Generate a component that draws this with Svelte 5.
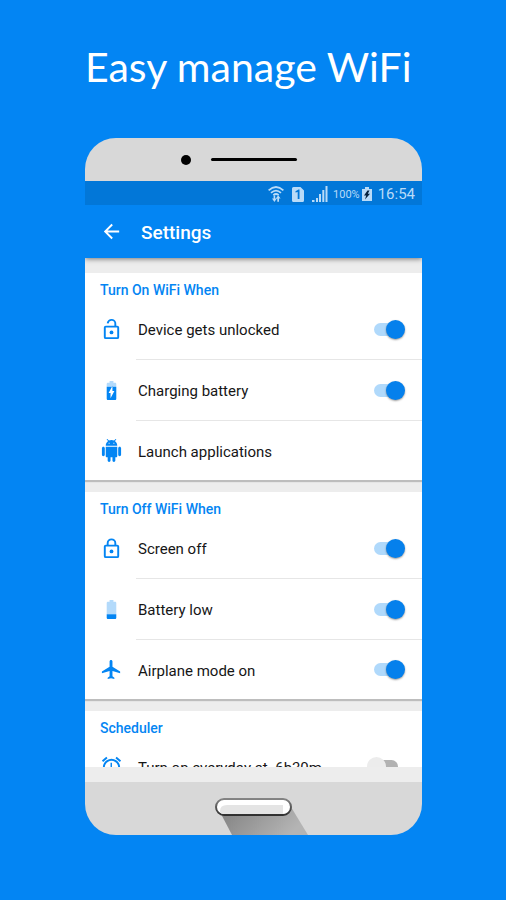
<script lang="ts">
	type IconName = 'unlock' | 'lock' | 'charging' | 'battery' | 'android' | 'plane' | 'alarm';

	interface Item {
		icon: IconName;
		label: string;
		on?: boolean;
	}

	let groups: { title: string; items: Item[] }[] = $state([
		{
			title: 'Turn On WiFi When',
			items: [
				{ icon: 'unlock', label: 'Device gets unlocked', on: true },
				{ icon: 'charging', label: 'Charging battery', on: true },
				{ icon: 'android', label: 'Launch applications' }
			]
		},
		{
			title: 'Turn Off WiFi When',
			items: [
				{ icon: 'lock', label: 'Screen off', on: true },
				{ icon: 'battery', label: 'Battery low', on: true },
				{ icon: 'plane', label: 'Airplane mode on', on: true }
			]
		},
		{
			title: 'Scheduler',
			items: [{ icon: 'alarm', label: 'Turn on everyday at  6h30m', on: false }]
		}
	]);
</script>

{#snippet icon(name: IconName)}
	<svg class="icon" viewBox="0 0 24 24" aria-hidden="true">
		{#if name === 'unlock' || name === 'lock'}
			<path
				d={name === 'lock'
					? 'M8 9V6.500a4 4 0 0 1 8 0V9'
					: 'M8 5.500A4 4 0 0 1 16 6.500V9'}
				class="icon__line"
			/>
			<rect x="5" y="9" width="14" height="12" rx="1" class="icon__line" />
			<circle cx="12" cy="15" r="2" />
		{:else if name === 'charging'}
			<path
				opacity=".3"
				d="M17 5.33C17 4.6 16.4 4 15.67 4H14V2h-4v2H8.33C7.6 4 7 4.6 7 5.33V8h10V5.33z"
			/>
			<path
				d="M7 8v12.67C7 21.4 7.6 22 8.33 22h7.33c.74 0 1.34-.6 1.34-1.33V8H7zm4 12v-5.5H9L13 7v5.5h2L11 20z"
			/>
		{:else if name === 'battery'}
			<path
				opacity=".3"
				d="M17 5.33C17 4.6 16.4 4 15.67 4H14V2h-4v2H8.33C7.6 4 7 4.6 7 5.33V17h10V5.33z"
			/>
			<path d="M7 17v3.67C7 21.4 7.6 22 8.33 22h7.33c.74 0 1.34-.6 1.34-1.33V17H7z" />
		{:else if name === 'android'}
			<path
				d="M6 18c0 .55.45 1 1 1h1v3.5c0 .83.67 1.5 1.5 1.5s1.5-.67 1.5-1.5V19h2v3.5c0 .83.67 1.5 1.5 1.5s1.5-.67 1.5-1.5V19h1c.55 0 1-.45 1-1V8H6v10zM3.5 8C2.67 8 2 8.67 2 9.5v7c0 .83.67 1.5 1.5 1.5S5 17.33 5 16.5v-7C5 8.67 4.33 8 3.5 8zm17 0c-.83 0-1.5.67-1.5 1.5v7c0 .83.67 1.5 1.5 1.5s1.5-.67 1.5-1.5v-7c0-.83-.67-1.5-1.5-1.5zm-4.97-5.84l1.3-1.3c.2-.2.2-.51 0-.71-.2-.2-.51-.2-.71 0l-1.48 1.48C13.85 1.23 12.95 1 12 1c-.96 0-1.86.23-2.66.63L7.85.15c-.2-.2-.51-.2-.71 0-.2.2-.2.51 0 .71l1.31 1.31C6.97 3.26 6 5.01 6 7h12c0-1.99-.97-3.75-2.47-4.84zM10 5H9V4h1v1zm5 0h-1V4h1v1z"
			/>
		{:else if name === 'plane'}
			<path
				d="M21 16v-2l-8-5V3.5c0-.83-.67-1.5-1.5-1.5S10 2.67 10 3.5V9l-8 5v2l8-2.5V19l-2 1.5V22l3.5-1 3.5 1v-1.5L13 19v-5.5l8 2.500z"
			/>
		{:else}
			<path
				d="M22 5.72l-4.6-3.86-1.29 1.53 4.6 3.86L22 5.72zM7.88 3.39L6.6 1.86 2 5.71l1.29 1.53 4.59-3.85zM12.5 8H11v6l4.75 2.85.75-1.23-4-2.37V8zM12 4c-4.97 0-9 4.03-9 9s4.02 9 9 9c4.97 0 9-4.03 9-9s-4.03-9-9-9zm0 16c-3.87 0-7-3.13-7-7s3.13-7 7-7 7 3.13 7 7-3.13 7-7 7z"
			/>
		{/if}
	</svg>
{/snippet}

<main class="promo">
	<h1 class="promo__title">Easy manage WiFi</h1>

	<div class="phone">
		<div class="phone__top">
			<span class="phone__camera"></span>
			<span class="phone__speaker"></span>
		</div>

		<div class="status">
			<svg class="status__wifi" viewBox="0 0 16 16" aria-hidden="true">
				<g fill="none" stroke="currentColor" stroke-width="1.7">
					<path d="M.6 4.4Q8-2.4 15.4 4.4" />
					<path d="M3 6.9Q8 2.4 13 6.9" />
					<path d="M5.3 9.2Q8 6.8 10.7 9.2" />
				</g>
				<path
					d="M5.6 9.5h1.6v3h1.6L6.400 15.900 4 12.500h1.600zM9.300 15.700V12.500H7.800l2.400-3.300 2.400 3.300h-1.600v3.200z"
				/>
			</svg>
			<svg class="status__sim" viewBox="0 0 12 15" aria-hidden="true">
				<path
					d="M1.500 0h7L12 3.500v10a1.500 1.500 0 0 1-1.500 1.500h-9A1.500 1.500 0 0 1 0 13.500v-12A1.500 1.500 0 0 1 1.500 0z"
				/>
				<path class="status__cut" d="M3.500 5.500V4.300L6.500 2.500H7.500V12H5.700V4.900z" />
			</svg>
			<svg class="status__signal" viewBox="0 0 16 16" aria-hidden="true">
				<path d="M0 14h2.500v2H0zM4 12h2v4H4zM7 8h2v8H7zM10.300 4h2v12h-2zM13.500 0h2v16h-2z" />
			</svg>
			<span class="status__percent">100%</span>
			<svg class="status__battery" viewBox="0 0 10 14" aria-hidden="true">
				<path d="M3 0h4v2h3v12H0V2h3z" />
				<path d="M5.500 3.500L2 8.500h2.200L3 12.500l5-5.700H5.800l1.700-3.300z" fill="#06233f" />
			</svg>
			<span class="status__time">16:54</span>
		</div>

		<header class="toolbar">
			<button class="toolbar__back" aria-label="Back">
				<svg class="icon" viewBox="0 0 24 24" aria-hidden="true">
					<path d="M20 11H7.830l5.590-5.590L12 4l-8 8 8 8 1.410-1.410L7.830 13H20v-2z" />
				</svg>
			</button>
			<h2 class="toolbar__title">Settings</h2>
		</header>

		<div class="content">
			{#each groups as group}
				<section class="card">
					<h3 class="card__title">{group.title}</h3>
					{#each group.items as item}
						<label class="row">
							{@render icon(item.icon)}
							<span class="row__body">
								<span class="row__label">{item.label}</span>
								{#if item.on !== undefined}
									<input class="switch" type="checkbox" bind:checked={item.on} />
								{/if}
							</span>
						</label>
					{/each}
				</section>
			{/each}
		</div>

		<div class="phone__bottom">
			<button class="home" aria-label="Home">
				<svg class="home__shape" viewBox="0 0 77 37" aria-hidden="true">
					<defs>
						<linearGradient id="cast" x1="0" y1="0" x2="1" y2="0.3">
							<stop offset="0" stop-color="#808080" />
							<stop offset="1" stop-color="#b4b4b4" />
						</linearGradient>
						<linearGradient id="rim" x1="0" y1="0" x2="0" y2="1">
							<stop offset="0" stop-color="#848484" />
							<stop offset="1" stop-color="#303030" />
						</linearGradient>
					</defs>
					<path d="M5 14L17 37h76L76 9z" fill="url(#cast)" />
					<rect
						x="1"
						y="1"
						width="75"
						height="16"
						rx="8"
						fill="#fff"
						stroke="url(#rim)"
						stroke-width="2"
					/>
					<path d="M5 13q0-6 7-6h62q-1 9-7 9H9q-4 0-4-3z" fill="#e4e4e4" />
					<path d="M68 2.500q6 1 6 6.500t-6 6.500z" fill="#fff" />
				</svg>
			</button>
		</div>
	</div>
</main>

<style>
	:global(body) {
		background: #0385f3;
	}

	.promo {
		display: flex;
		flex-direction: column;
		box-sizing: border-box;
		height: 100vh;
		padding: 42px 84px 65px 85px;
		background: #0385f3;
		font-family: Roboto, sans-serif;
		color: #161616;
	}

	.promo__title {
		flex: none;
		margin: 0 0 46px;
		color: #fff;
		font: 400 41px/50px Lato, sans-serif;
		white-space: nowrap;
	}

	.phone {
		display: flex;
		flex: 1;
		flex-direction: column;
		min-height: 0;
		border-radius: 31px;
		background: #d8d8d8;
		overflow: hidden;
	}

	.phone__top {
		display: grid;
		flex: none;
		grid-template-columns: 1fr 86px 1fr;
		align-items: center;
		gap: 20px;
		height: 43px;
	}

	.phone__camera {
		justify-self: end;
		width: 10px;
		height: 10px;
		border-radius: 50%;
		background: #000;
	}

	.phone__speaker {
		height: 3px;
		border-radius: 2px;
		background: #000;
	}

	.status {
		display: flex;
		flex: none;
		align-items: center;
		justify-content: flex-end;
		box-sizing: border-box;
		height: 24px;
		padding: 2px 7px 0 0;
		background: #0277d8;
		color: #b9dbf8;
	}

	.status svg {
		fill: currentColor;
	}

	.status__wifi {
		width: 16px;
		height: 16px;
		margin-right: 8px;
	}

	.status__sim {
		width: 12px;
		height: 15px;
		margin-right: 8px;
	}

	.status__signal {
		width: 16px;
		height: 16px;
		margin-right: 5px;
	}

	.status .status__cut {
		fill: #0277d8;
	}

	.status__percent {
		margin-right: 2px;
		font-size: 11px;
	}

	.status__battery {
		width: 10px;
		height: 14px;
		margin-right: 6px;
	}

	.status__time {
		font-size: 15px;
	}

	.toolbar {
		z-index: 1;
		display: flex;
		flex: none;
		align-items: center;
		gap: 18px;
		height: 53px;
		padding: 0 15px;
		background: #0385f3;
		box-shadow: 0 1px 5px rgba(0, 0, 0, 0.5);
		color: #fff;
		/* keep the shadow off the status bar */
		clip-path: inset(0 0 -8px);
	}

	.toolbar__back {
		display: flex;
		padding: 0;
		border: 0;
		background: none;
		color: #fff;
	}

	.toolbar__title {
		margin: 0;
		padding-top: 2px;
		font-size: 19px;
		font-weight: 500;
	}

	.icon {
		flex: none;
		width: 23px;
		height: 23px;
		color: #0385f3;
		fill: currentColor;
	}

	.toolbar .icon {
		color: #fff;
	}

	.icon__line {
		fill: none;
		stroke: currentColor;
		stroke-width: 2;
	}

	.content {
		display: flex;
		flex: 1;
		flex-direction: column;
		gap: 12px;
		min-height: 0;
		padding-top: 15px;
		border-bottom: 15px solid #ededed;
		background: #ededed;
		overflow: hidden;
	}

	.card {
		flex: none;
		padding-top: 8px;
		background: #fff;
		box-shadow: 0 2px 1px rgba(0, 0, 0, 0.2);
	}

	.card__title {
		margin: 0 15px;
		color: #0385f3;
		font-size: 14px;
		font-weight: 500;
		line-height: 18px;
	}

	.row {
		display: flex;
		align-items: center;
		gap: 13px;
		padding-left: 15px;
	}

	.row__body {
		display: flex;
		flex: 1;
		align-items: center;
		justify-content: space-between;
		height: 60px;
		padding-right: 17px;
		border-bottom: 1px solid #e6e6e6;
	}

	.row:last-child .row__body {
		height: 59px;
		border-bottom: 0;
	}

	.row__label {
		padding: 2px 0 0 2px;
		font-size: 15px;
		white-space: pre;
	}

	.switch {
		position: relative;
		flex: none;
		width: 38px;
		height: 19px;
		margin: 0;
		appearance: none;
	}

	.switch::before,
	.switch::after {
		position: absolute;
		content: '';
	}

	.switch::before {
		inset: 3px 7px;
		border-radius: 7px;
		background: #b2b2b2;
	}

	.switch::after {
		top: 0;
		left: 0;
		width: 19px;
		height: 19px;
		border-radius: 50%;
		background: #ececec;
	}

	.switch:checked::before {
		background: #b0d9fb;
	}

	.switch:checked::after {
		left: 19px;
		background: #0580ec;
		box-shadow: 0 1px 2px rgba(0, 0, 0, 0.4);
	}

	.phone__bottom {
		display: flex;
		flex: none;
		justify-content: center;
		height: 37px;
		padding-top: 16px;
	}

	.home {
		display: block;
		width: 77px;
		height: 37px;
		padding: 0;
		border: 0;
		background: none;
	}

	.home__shape {
		display: block;
		width: 77px;
		height: 37px;
		overflow: visible;
	}
</style>
